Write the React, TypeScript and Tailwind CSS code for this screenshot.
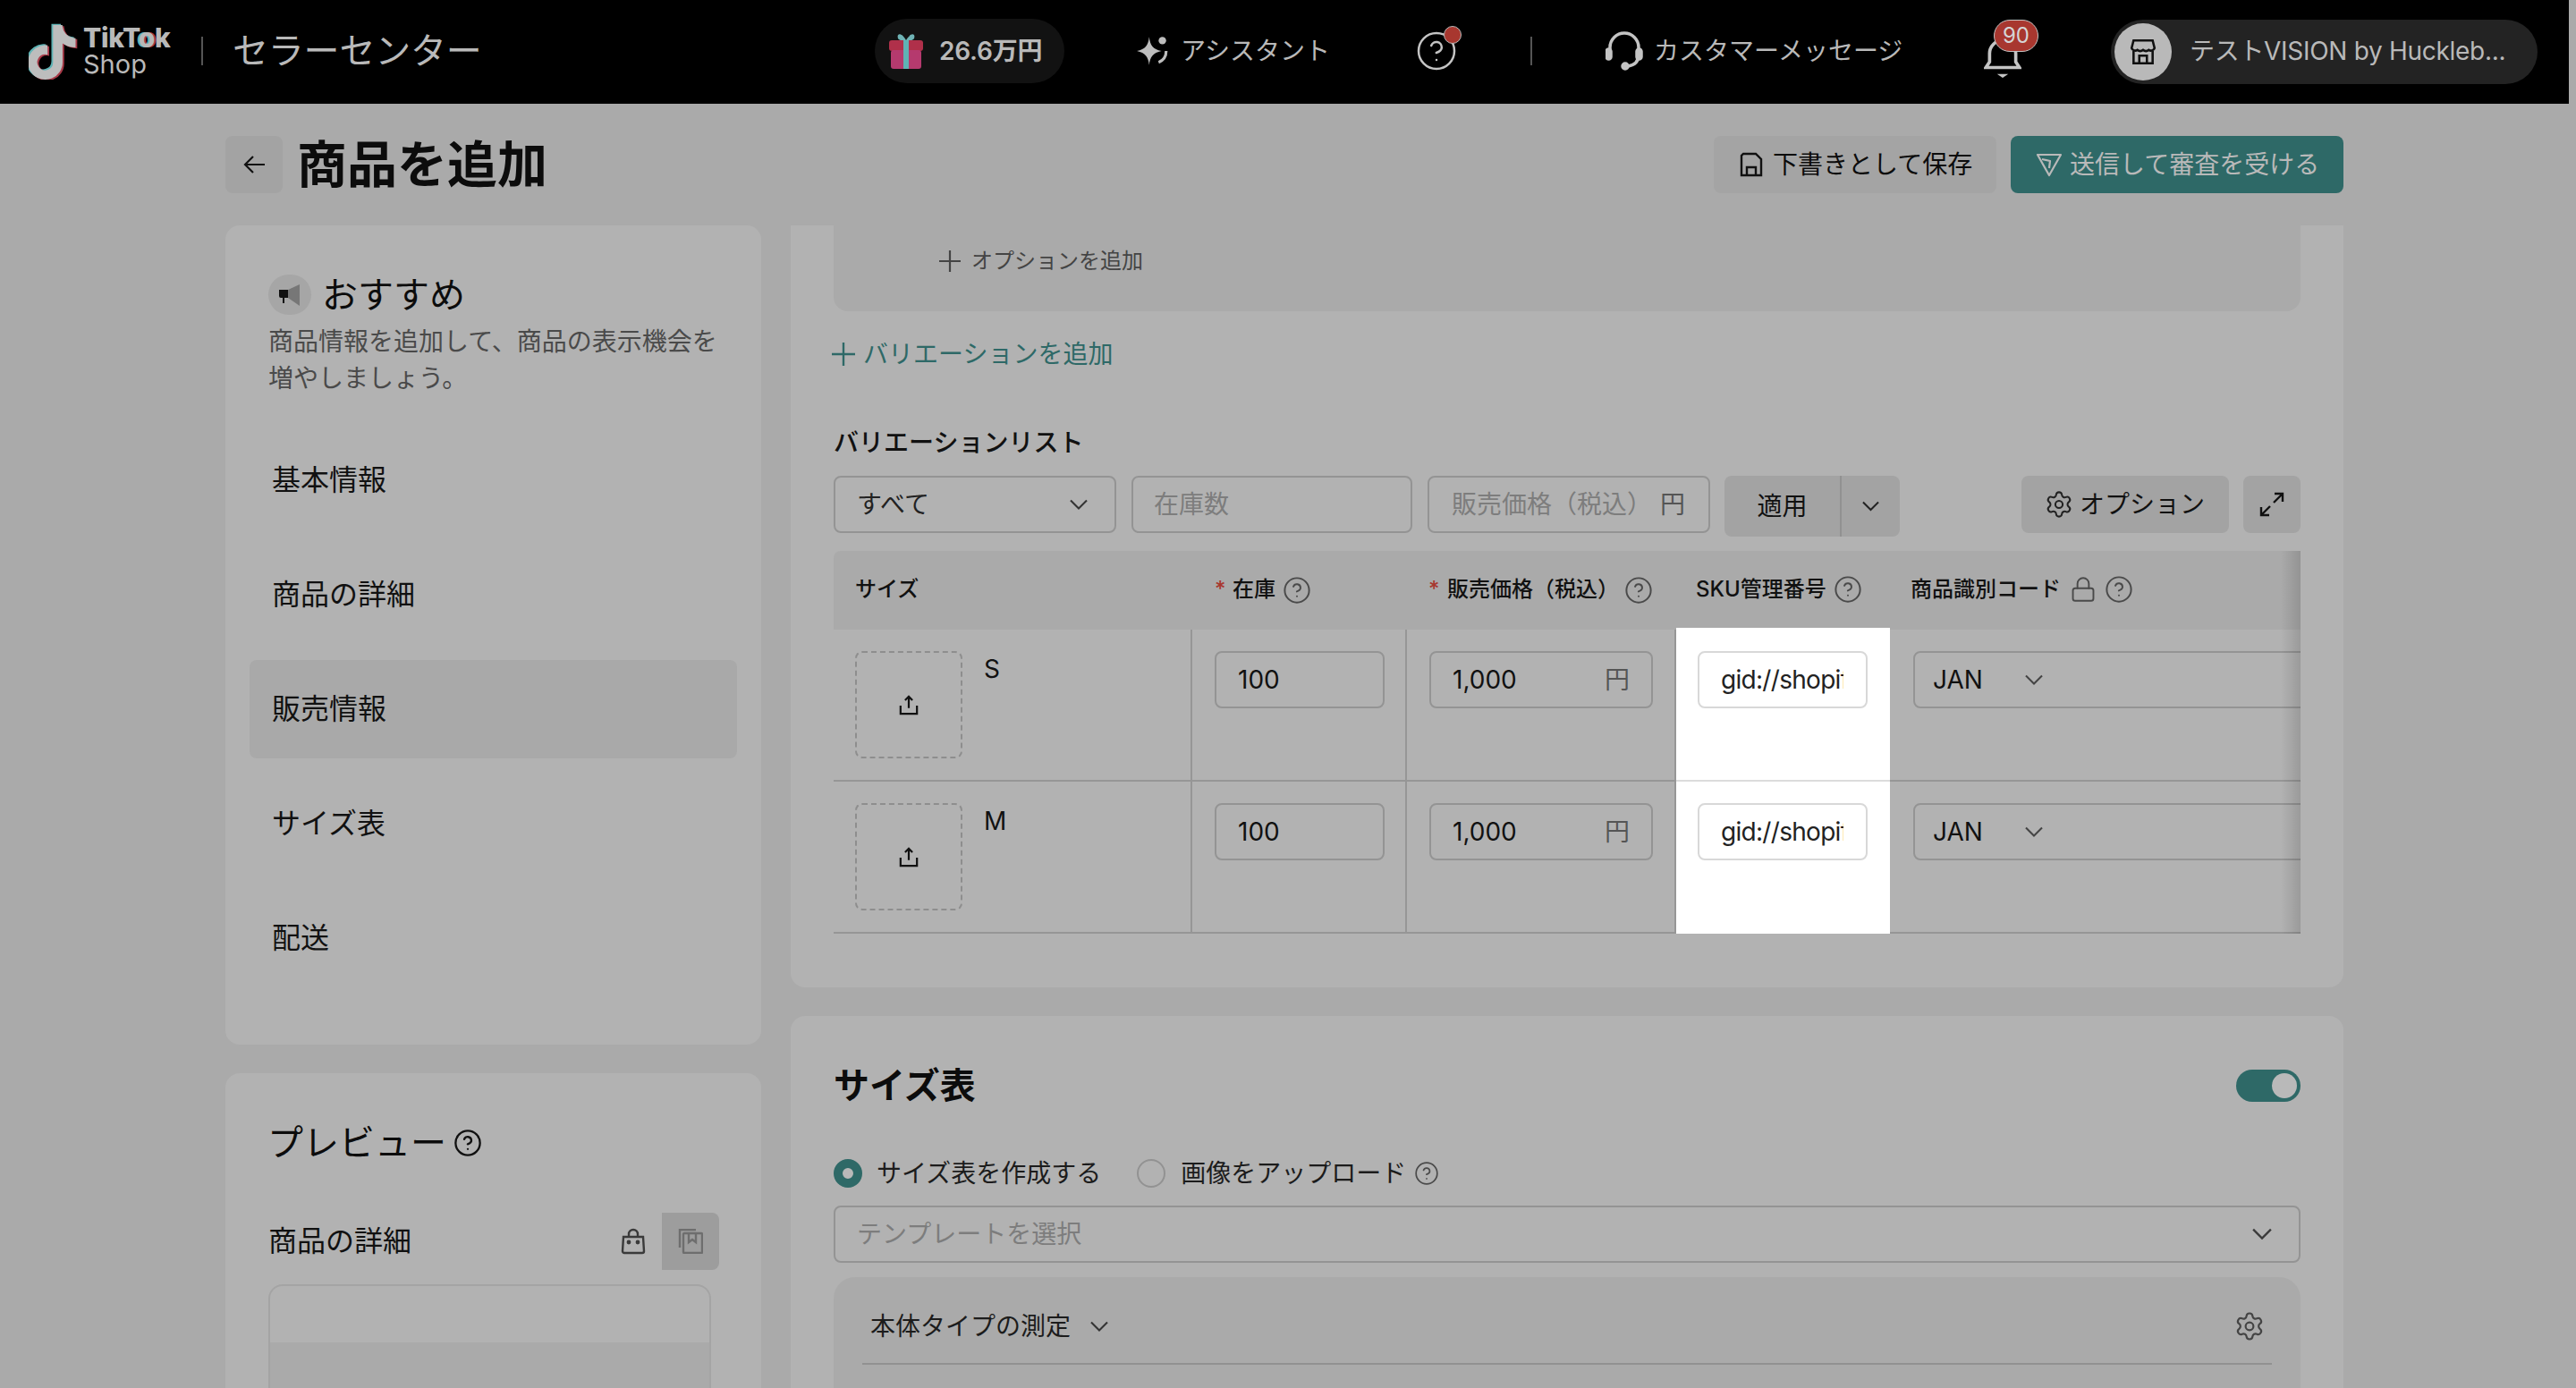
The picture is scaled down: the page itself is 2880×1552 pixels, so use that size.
import React from "react";
import { CircleHelp, Lock, Settings } from "lucide-react";

const Help = ({ size = 30, color = "#4a4a4a", sw = 1.45 }: { size?: number; color?: string; sw?: number }) => (
  <CircleHelp size={size} color={color} strokeWidth={sw} viewBox="1 1 22 22" className="shrink-0" />
);

const Gear = ({ size = 30, color = "#222" }: { size?: number; color?: string }) => (
  <Settings size={size} color={color} strokeWidth={1.5} viewBox="1 1 22 22" className="shrink-0" />
);

const Chevron = ({ w = 20, color = "#333" }: { w?: number; color?: string }) => (
  <svg width={w} height={w * 0.6} viewBox="0 0 20 12" fill="none" stroke={color} strokeWidth="2.1" className="shrink-0">
    <path d="M1 1.5l9 9 9-9" />
  </svg>
);

const PlusIcon = ({ size, color }: { size: number; color: string }) => (
  <svg width={size} height={size} viewBox="0 0 24 24" fill="none" stroke={color} strokeWidth="2.2" className="shrink-0">
    <path d="M12 0v24M0 12h24" />
  </svg>
);

const Note = ({ fill, x = 0, y = 0 }: { fill: string; x?: number; y?: number }) => (
  <path
    transform={`translate(${x} ${y})`}
    fill={fill}
    d="M19.59 6.69a4.83 4.83 0 0 1-3.77-4.25V2h-3.45v13.67a2.89 2.89 0 0 1-5.2 1.74 2.89 2.89 0 0 1 2.31-4.64 2.93 2.93 0 0 1 .88.13V9.4a6.84 6.84 0 0 0-1-.05A6.33 6.33 0 0 0 5 20.1a6.34 6.34 0 0 0 10.86-4.43v-7a8.16 8.16 0 0 0 4.77 1.52v-3.4a4.85 4.85 0 0 1-1-.1z"
  />
);

const Upload = () => (
  <svg width="22" height="24" viewBox="0 0 24 26" fill="none" stroke="#111" strokeWidth="2.4">
    <path d="M12 17V3M7.5 7.5L12 3l4.5 4.5" />
    <path d="M2 14v10h20V14" />
  </svg>
);

const Field = ({ w, children, pl = 25, pr = 0, border = "border-[#949494]" }: { w: number; children?: React.ReactNode; pl?: number; pr?: number; border?: string }) => (
  <div
    className={`h-[64px] shrink-0 rounded-lg border-2 flex items-center text-[28px] ${border}`}
    style={{ width: w, paddingLeft: pl, paddingRight: pr }}
  >
    {children}
  </div>
);

const Row = ({ name, first }: { name: string; first?: boolean }) => (
  <div className="flex h-[170px]">
    <div className="w-[401px] h-full border-r-2 border-b-2 border-[#969696] pl-[24px] pt-[24px] flex gap-[24px]">
      <div className="w-[120px] h-[120px] rounded-lg border-2 border-dashed border-[#8e8e8e] flex items-center justify-center">
        <Upload />
      </div>
      <span className="text-[28px] leading-[40px] text-[#111]">{name}</span>
    </div>
    <div className="w-[240px] h-full border-r-2 border-b-2 border-[#969696] pl-[25px] pt-[24px]">
      <Field w={190} pl={24}><span className="text-[#111]">100</span></Field>
    </div>
    <div className="w-[301px] h-full border-r-2 border-b-2 border-[#969696] pl-[25px] pt-[24px]">
      <Field w={250} pl={24} pr={24}>
        <span className="text-[#111]">1,000</span>
        <span className="ml-auto text-[#555]">円</span>
      </Field>
    </div>
    <div className={`w-[239px] bg-white pl-[24px] ${first ? "h-[172px] -mt-[2px] pt-[26px] border-b-2 border-[#dcdcdc]" : "h-full pt-[24px]"}`}>
      <Field w={190} pl={24} pr={25} border="border-[#d8d8d8]">
        <input
          readOnly
          value="gid://shopify/ProductVariant"
          className="w-full min-w-0 bg-transparent outline-none text-[#222] tracking-[-0.7px]"
        />
      </Field>
    </div>
    <div className="w-[459px] h-full border-b-2 border-[#969696] pl-[26px] pt-[24px]">
      <Field w={560} pl={20}>
        <span className="text-[#111] w-[103px]">JAN</span>
        <Chevron w={20} color="#444" />
      </Field>
    </div>
  </div>
);

const NavItem = ({ label, active }: { label: string; active?: boolean }) => (
  <div className={`h-[110px] mb-[18px] rounded-lg flex items-center pl-[25px] text-[32px] text-[#111] ${active ? "bg-[#a9a9a9]" : ""}`}>
    {label}
  </div>
);

export default function App() {
  return (
    <div className="w-[2880px] h-[1552px] overflow-hidden bg-[#aaaaaa] [font-family:Inter,'Noto_Sans_CJK_JP',sans-serif]">
      {/* Top bar */}
      <header className="w-[2872px] h-[116px] bg-black flex items-center text-[#b9b9b9] pb-[2px]">
        <div className="w-[978px] flex items-center pl-[32px] shrink-0">
          <svg width="56" height="64" viewBox="3.6 1 18 21">
            <Note fill="#5fb3b5" x={-0.6} y={-0.4} />
            <Note fill="#a83a48" x={0.6} y={0.4} />
            <Note fill="#bdbdbd" />
          </svg>
          <div className="ml-[5px] flex flex-col w-[100px]">
            <span className="text-[30px] leading-[30px] font-extrabold tracking-[-0.3px]">
              TikT<span className="[text-shadow:-2px_0_#5fb3b5,2px_0_#a83a48]">o</span>k
            </span>
            <span className="text-[29px] leading-[30px]">Shop</span>
          </div>
          <div className="ml-[32px] w-[2px] h-[32px] bg-[#555]" />
          <span className="ml-[33px] text-[40px] leading-[50px] whitespace-nowrap -tracking-[0.2px]">セラーセンター</span>
        </div>

        <div className="w-[212px] h-[72px] rounded-full bg-[#121212] flex items-center pl-[14px] shrink-0">
          <svg width="42" height="42" viewBox="0 0 42 42">
            <path d="M21 9C16 0 10 1 12 7c1 2 5 3 9 3 4 0 8-1 9-3 2-6-4-7-9 2z" fill="#6fb3b5" />
            <rect x="2" y="9" width="38" height="12" rx="3" fill="#b0304a" />
            <rect x="4" y="20" width="34" height="21" rx="3" fill="#b53a6e" />
            <rect x="18" y="9" width="6" height="32" fill="#5fb3b5" />
          </svg>
          <span className="ml-[16px] text-[28px] font-semibold whitespace-nowrap -tracking-[0.2px]">26.6万円</span>
        </div>

        <div className="ml-[80px] flex items-center shrink-0">
          <svg width="38" height="38" viewBox="0 0 36 36" fill="#bdbdbd">
            <path d="M14 3c1 9 4 13 13 15-9 2-12 6-13 15-1-9-4-13-13-15 9-2 12-6 13-15z" />
            <circle cx="28" cy="7" r="4" />
            <path d="M32 18c0 6-3 10-8 12" fill="none" stroke="#bdbdbd" strokeWidth="3" />
          </svg>
          <span className="ml-[12px] w-[168px] text-[28px] whitespace-nowrap">アシスタント</span>
        </div>

        <div className="ml-[96px] relative w-[44px] h-[44px] shrink-0">
          <CircleHelp size={44} color="#c4c4c4" strokeWidth={1.25} viewBox="1 1 22 22" />
          <span className="absolute -top-[6px] -right-[6px] w-[20px] h-[20px] rounded-full bg-[#a8372f] border border-[#b9b9b9]" />
        </div>

        <div className="ml-[83px] w-[2px] h-[32px] bg-[#555] shrink-0" />

        <div className="ml-[82px] flex items-center shrink-0">
          <svg width="42" height="44" viewBox="0 0 42 44" fill="none" stroke="#c4c4c4" strokeWidth="3.5">
            <path d="M5 24v-6a16 16 0 0 1 32 0v8c0 8-5 12-12 13" />
            <rect x="1" y="20" width="5" height="11" rx="2.5" fill="#c4c4c4" />
            <rect x="35" y="20" width="5" height="11" rx="2.5" fill="#c4c4c4" />
            <circle cx="22" cy="39" r="3" fill="#c4c4c4" />
          </svg>
          <span className="ml-[12px] w-[280px] text-[28px] whitespace-nowrap">カスタマーメッセージ</span>
        </div>

        <div className="ml-[89px] relative w-[42px] h-[46px] mt-[16px] shrink-0">
          <svg width="42" height="46" viewBox="0 0 40 44" fill="none" stroke="#c4c4c4" strokeWidth="3.5">
            <path d="M2 32h36l-4-6V17a14 14 0 0 0-28 0v9z" />
            <path d="M14 39h12l-6 4z" fill="#c4c4c4" stroke="none" />
          </svg>
          <span className="absolute -top-[20px] left-[11px] w-[50px] h-[36px] rounded-full bg-[#a8372f] border border-[#c4c4c4] flex items-center justify-center text-[24px] leading-none text-[#d5d5d5]">
            90
          </span>
        </div>

        <div className="ml-[100px] w-[477px] h-[72px] rounded-full bg-[#232323] flex items-center pl-[4px] shrink-0 mt-[2px]">
          <div className="w-[64px] h-[64px] rounded-full bg-[#b9b9b9] flex items-center justify-center">
            <svg width="32" height="32" viewBox="0 0 30 30" fill="none" stroke="#111" strokeWidth="2.4">
              <path d="M5 3h20l2 8a4 4 0 0 1-6 2 5 5 0 0 1-6 0 5 5 0 0 1-6 0 4 4 0 0 1-6-2z" />
              <path d="M5 14v13h20V14" />
              <path d="M11 27v-8h8v8" />
            </svg>
          </div>
          <span className="ml-[20px] -mt-[2px] w-[360px] text-[28px] whitespace-nowrap tracking-[-0.3px]">テストVISION by Huckleb...</span>
        </div>
      </header>

      {/* Page heading */}
      <div className="w-[2620px] pl-[252px] h-[136px] flex items-center">
        <div className="w-[64px] h-[64px] rounded-lg bg-[#a3a3a3] flex items-center justify-center">
          <svg width="24" height="24" viewBox="0 0 24 24" fill="none" stroke="#111" strokeWidth="2.2">
            <path d="M24 12H2M11 3l-9 9 9 9" />
          </svg>
        </div>
        <h1 className="ml-[16px] text-[56px] leading-[64px] font-semibold text-[#0c0c0c]">商品を追加</h1>
        <div className="ml-auto h-[64px] w-[316px] rounded-lg bg-[#a4a4a4] flex items-center pl-[29px] text-[28px] text-[#0c0c0c]">
          <svg width="26" height="28" viewBox="0 0 26 28" fill="none" stroke="#111" strokeWidth="2.4">
            <path d="M4 2h14l6 6v18H2V4z" />
            <path d="M8 26v-9h10v9" />
          </svg>
          <span className="ml-[11px] whitespace-nowrap">下書きとして保存</span>
        </div>
        <div className="ml-[16px] h-[64px] w-[372px] rounded-lg bg-[#2e6967] flex items-center pl-[28px] text-[28px] text-[#b9b9b9]">
          <svg width="30" height="30" viewBox="0 0 30 30" fill="none" stroke="#b9b9b9" strokeWidth="2.2" strokeLinejoin="round">
            <path d="M2 4h26L15 27z" />
            <path d="M7 9l9 2-1 8" />
          </svg>
          <span className="ml-[8px] whitespace-nowrap">送信して審査を受ける</span>
        </div>
      </div>

      <div className="pl-[252px] flex gap-[33px] items-start">
        {/* Left column */}
        <div className="w-[599px] flex flex-col gap-[32px] shrink-0">
          <section className="h-[916px] rounded-2xl bg-[#b2b2b2] pt-[55px] px-[48px]">
            <div className="flex items-center h-[45px]">
              <div className="w-[48px] h-[45px] rounded-full bg-[#a6a6a6] flex items-center justify-center">
                <svg width="26" height="26" viewBox="0 0 26 26">
                  <path d="M1 7h10v9H7v6H5v-6H3a2 2 0 0 1-2-2z" fill="#111" />
                  <path d="M11 7l13-6v24l-13-9z" fill="#777" />
                </svg>
              </div>
              <h2 className="ml-[12px] text-[40px] leading-[50px] text-[#0c0c0c] whitespace-nowrap">おすすめ</h2>
            </div>
            <p className="mt-[10px] text-[28px] leading-[41px] text-[#4a4a4a]">
              商品情報を追加して、商品の表示機会を<br />増やしましょう。
            </p>
            <nav className="mt-[38px] -mx-[21px]">
              <NavItem label="基本情報" />
              <NavItem label="商品の詳細" />
              <NavItem label="販売情報" active />
              <NavItem label="サイズ表" />
              <NavItem label="配送" />
            </nav>
          </section>

          <section className="h-[400px] rounded-t-2xl bg-[#b2b2b2] pt-[54px] px-[48px]">
            <div className="flex items-center h-[48px]">
              <h2 className="-ml-[1px] text-[40px] leading-[48px] text-[#0c0c0c] whitespace-nowrap">プレビュー</h2>
              <span className="ml-[9px]"><Help size={30} color="#111" sw={1.7} /></span>
            </div>
            <div className="mt-[54px] flex items-center h-[64px] w-[504px]">
              <span className="text-[32px] text-[#111]">商品の詳細</span>
              <svg className="ml-auto" width="28" height="30" viewBox="0 0 28 30" fill="none" stroke="#3a3a3a" strokeWidth="2.4">
                <path d="M3 10h22l1 16a2 2 0 0 1-2 2H4a2 2 0 0 1-2-2z" />
                <path d="M9 10V7a5 5 0 0 1 10 0v3" />
                <circle cx="9" cy="16" r="1.2" fill="#3a3a3a" />
                <circle cx="19" cy="16" r="1.2" fill="#3a3a3a" />
              </svg>
              <div className="ml-[18px] w-[64px] h-[64px] rounded-r-lg bg-[#9d9d9d] flex items-center justify-center">
                <svg width="28" height="28" viewBox="0 0 28 28" fill="none" stroke="#6e6e6e" strokeWidth="2.4">
                  <path d="M20 1H2v20" />
                  <rect x="6" y="5" width="21" height="22" rx="1" />
                  <path d="M12 6v9l4-3 4 3V6" />
                </svg>
              </div>
            </div>
            <div className="mt-[16px] w-[495px] h-[200px] rounded-t-2xl border-2 border-[#a4a4a4] overflow-hidden">
              <div className="h-[63px]" />
              <div className="h-full bg-[#aaaaaa]" />
            </div>
          </section>
        </div>

        {/* Right column */}
        <div className="w-[1736px] flex flex-col gap-[32px] shrink-0">
          <section className="rounded-b-2xl bg-[#b2b2b2] px-[48px] pb-[60px]">
            <div className="h-[96px] rounded-b-2xl bg-[#aaaaaa] pl-[118px] pt-[20px] flex items-start">
              <div className="flex items-center h-[40px]">
                <PlusIcon size={24} color="#444" />
                <span className="ml-[12px] text-[24px] text-[#444]">オプションを追加</span>
              </div>
            </div>

            <div className="mt-[28px] h-[40px] flex items-center text-[#2e6967]">
              <span className="-ml-[2px]"><PlusIcon size={26} color="#2e6967" /></span>
              <span className="ml-[9px] text-[28px] whitespace-nowrap">バリエーションを追加</span>
            </div>

            <h3 className="mt-[59px] text-[28px] leading-[40px] font-medium text-[#111]">バリエーションリスト</h3>

            <div className="mt-[17px] h-[68px] flex items-start">
              <Field w={316} pl={24} pr={30}>
                <span className="text-[#222]">すべて</span>
                <span className="ml-auto"><Chevron w={20} /></span>
              </Field>
              <div className="ml-[17px]">
                <Field w={314} pl={23}><span className="text-[#7d7d7d]">在庫数</span></Field>
              </div>
              <div className="ml-[17px]">
                <Field w={316} pr={26}>
                  <span className="text-[#7d7d7d] whitespace-nowrap">販売価格（税込）</span>
                  <span className="ml-auto text-[#555]">円</span>
                </Field>
              </div>
              <div className="ml-[16px] h-[68px] w-[196px] rounded-lg bg-[#a3a3a3] flex items-center text-[28px] text-[#111]">
                <span className="w-[131px] h-full flex items-center justify-center border-r-2 border-[#919191]">適用</span>
                <span className="flex-1 flex justify-center"><Chevron w={19} color="#222" /></span>
              </div>
              <div className="ml-auto h-[64px] w-[232px] rounded-lg bg-[#a3a3a3] flex items-center justify-center gap-[8px] text-[28px] text-[#111]">
                <Gear size={30} />
                <span>オプション</span>
              </div>
              <div className="ml-[16px] h-[64px] w-[64px] rounded-lg bg-[#a3a3a3] flex items-center justify-center">
                <svg width="28" height="28" viewBox="0 0 28 28" fill="none" stroke="#111" strokeWidth="2.4">
                  <path d="M16 12L26 2M17 2h9v9" />
                  <path d="M12 16L2 26M11 26H2v-9" />
                </svg>
              </div>
            </div>

            <div className="mt-[16px] w-[1640px] relative overflow-hidden">
              <div className="h-[88px] pb-[2px] bg-[#aaaaaa] rounded-tl-lg flex items-center text-[24px] font-medium text-[#111] whitespace-nowrap">
                <div className="w-[401px] pl-[24px]">サイズ</div>
                <div className="w-[240px] pl-[25px] flex items-center">
                  <span className="text-[#a8372f] w-[20px]">*</span>
                  <span>在庫</span>
                  <span className="ml-[9px] mt-[2px]"><Help /></span>
                </div>
                <div className="w-[301px] pl-[24px] flex items-center">
                  <span className="text-[#a8372f] w-[21px]">*</span>
                  <span>販売価格（税込）</span>
                  <span className="ml-[7px] mt-[2px]"><Help /></span>
                </div>
                <div className="w-[240px] pl-[22px] flex items-center">
                  <span>SKU管理番号</span>
                  <span className="ml-[9px]"><Help /></span>
                </div>
                <div className="flex-1 pl-[22px] flex items-center">
                  <span>商品識別コード</span>
                  <Lock size={28} color="#4a4a4a" strokeWidth={1.5} viewBox="2 1 20 22" className="ml-[11px]" />
                  <span className="ml-[11px]"><Help /></span>
                </div>
              </div>
              <Row name="S" first />
              <Row name="M" />
              <div className="absolute right-0 top-0 bottom-0 w-[22px] bg-linear-to-r from-transparent to-[#00000022]" />
            </div>
          </section>

          <section className="rounded-t-2xl bg-[#b2b2b2] px-[48px] pt-[60px] h-[500px]">
            <div className="h-[36px] flex items-center justify-between">
              <h2 className="text-[40px] leading-[48px] font-semibold text-[#0c0c0c]">サイズ表</h2>
              <div className="w-[72px] h-[36px] rounded-full bg-[#2e6967] flex items-center justify-end pr-[4px]">
                <div className="w-[28px] h-[28px] rounded-full bg-[#b9b9b9]" />
              </div>
            </div>

            <div className="mt-[60px] h-[40px] flex items-center text-[28px] text-[#1c1c1c] whitespace-nowrap">
              <span className="w-[32px] h-[32px] rounded-full border-[10px] border-[#2e6967] bg-[#b9b9b9]" />
              <span className="ml-[16px]">サイズ表を作成する</span>
              <span className="ml-[40px] w-[32px] h-[32px] rounded-full border-2 border-[#929292]" />
              <span className="ml-[17px]">画像をアップロード</span>
              <span className="ml-[10px]"><Help size={26} /></span>
            </div>

            <div className="mt-[16px]">
              <Field w={1640} pl={24} pr={30}>
                <span className="text-[#7d7d7d]">テンプレートを選択</span>
                <span className="ml-auto"><Chevron w={22} color="#3a3a3a" /></span>
              </Field>
            </div>

            <div className="mt-[16px] h-[300px] rounded-t-3xl bg-[#aaaaaa] px-[32px]">
              <div className="h-[98px] pt-[35px] pb-[22px] pl-[9px] pr-[9px] border-b-2 border-[#919191] flex items-center text-[28px] text-[#1c1c1c]">
                <span>本体タイプの測定</span>
                <span className="ml-[22px]"><Chevron w={20} /></span>
                <span className="ml-auto"><Gear size={32} color="#444" /></span>
              </div>
            </div>
          </section>
        </div>
      </div>
    </div>
  );
}
